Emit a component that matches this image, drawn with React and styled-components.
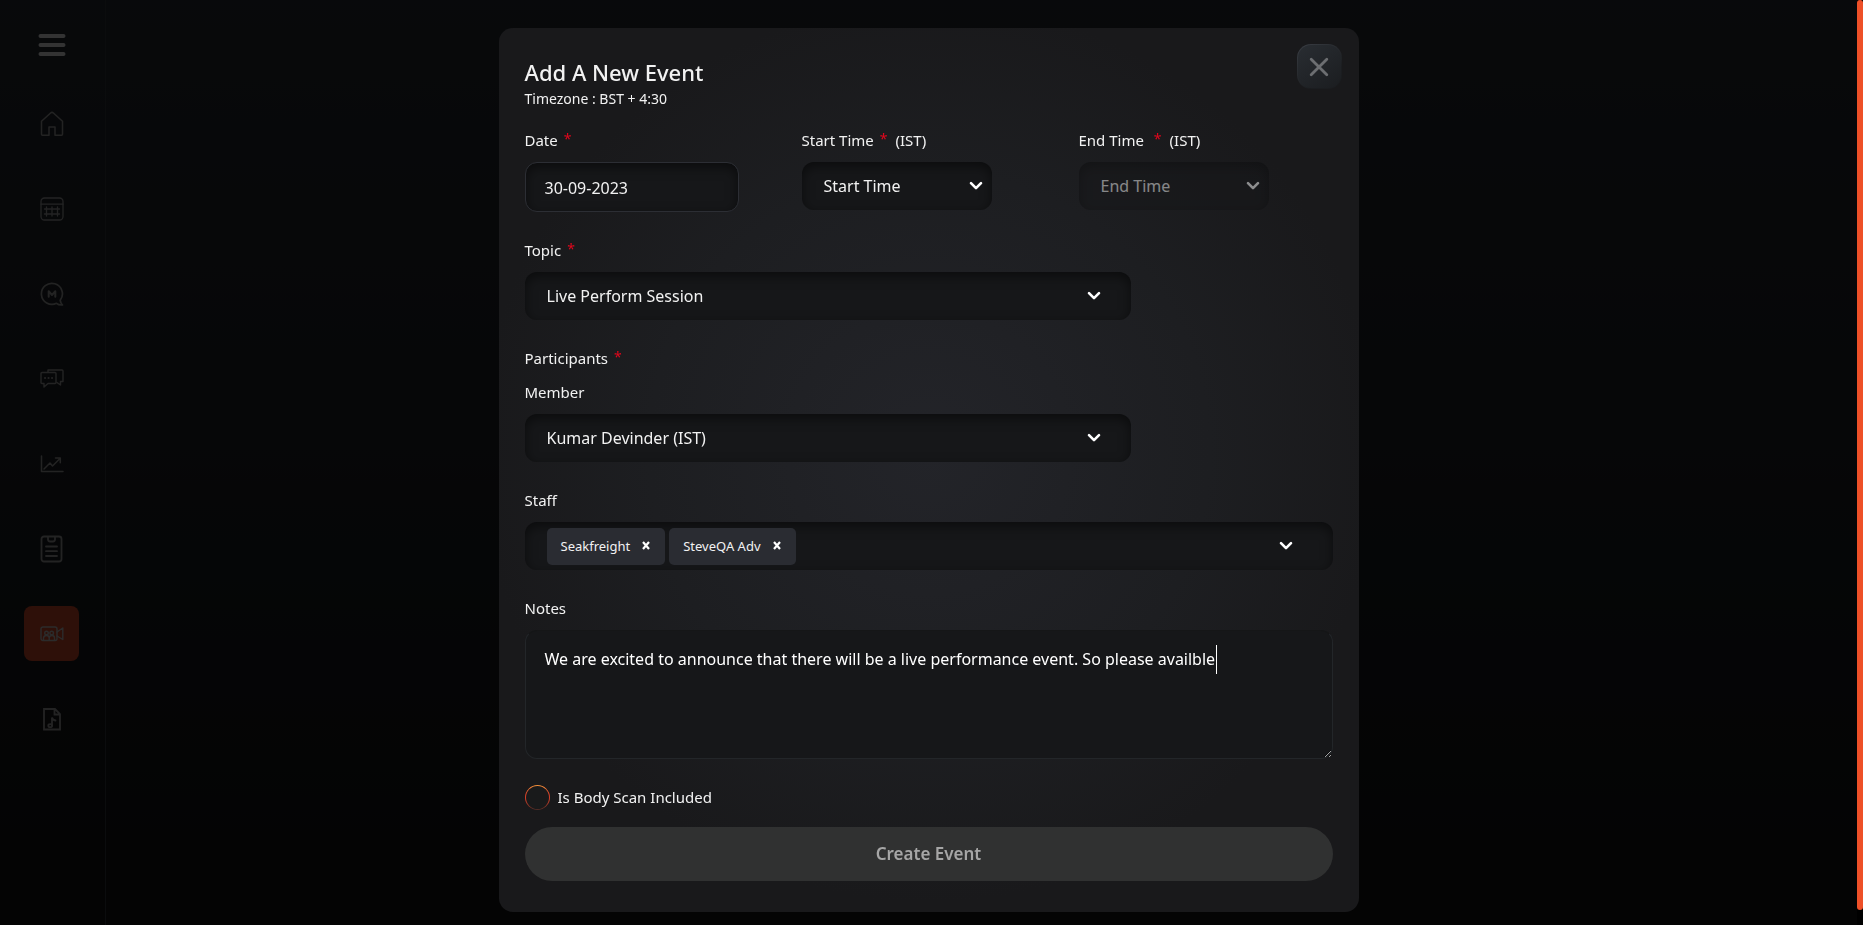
import React, { useLayoutEffect, useRef, useState } from "react";
import styled, { createGlobalStyle } from "styled-components";

const GlobalStyle = createGlobalStyle`
  * { box-sizing: border-box; }
  body {
    margin: 0;
    background: #141414;
    color: #f2f2f2;
    font-family: "Noto Sans", "Open Sans", sans-serif;
    font-size: 16px;
    overflow: hidden;
  }
  button, input, select, textarea { font: inherit; color: inherit; margin: 0; }
`;

const Page = styled.div`
  min-height: 100vh;
  display: flex;
  background: linear-gradient(#2a2f37, #20242a 45%, #141414);
`;

const Sidebar = styled.nav`
  width: 106px;
  padding: 17px 2px 0 0;
  display: flex;
  flex-direction: column;
  align-items: center;
  border-right: 1px solid #3a3c40;
`;

const MenuButton = styled.button`
  width: 55px;
  height: 55px;
  padding: 0;
  border: 0;
  background: none;
  color: #fff;
  display: grid;
  place-items: center;
`;

const NavList = styled.ul`
  list-style: none;
  margin: 24px 0 0;
  padding: 0;
  display: grid;
  gap: 30px;
`;

const NavLink = styled.a`
  width: 55px;
  height: 55px;
  border-radius: 8px;
  display: grid;
  place-items: center;
  color: ${(p) => (p.$active ? "#d6d6d6" : "#afafaf")};
  background: ${(p) => (p.$active ? "#e6502d" : "transparent")};
`;

const Overlay = styled.div`
  position: fixed;
  inset: 0;
  padding: 28px 22px 12px 16px;
  display: flex;
  justify-content: center;
  align-items: flex-start;
  overflow: hidden;
  background: rgba(0, 0, 0, 0.8);
`;

const ScrollThumb = styled.div`
  position: fixed;
  top: 0;
  right: 0;
  bottom: 0;
  width: 6px;
  background: #000;
  &::before {
    content: "";
    display: block;
    height: calc(100% - 15px);
    border-radius: 3px;
    background: #ee5028;
  }
`;

const Dialog = styled.form`
  position: relative;
  width: 100%;
  max-width: 860px;
  padding: 28px 26px 31px;
  border-radius: 14px;
  background: radial-gradient(circle at 50% 48%, #232429 0, #1d1e21 280px, #19191b 450px);
`;

const Title = styled.h1`
  margin: 0;
  font-size: 22px;
  line-height: 33px;
  font-weight: 500;
`;

const Timezone = styled.p`
  margin: 0 0 20px;
  font-size: 14px;
  line-height: 20px;
`;

const CloseButton = styled.button`
  position: absolute;
  top: 16px;
  right: 17px;
  width: 45px;
  height: 45px;
  padding: 0;
  display: grid;
  place-items: center;
  border: 1px solid transparent;
  border-radius: 14px;
  color: #6c6e71;
  background:
    linear-gradient(145deg, #292d32, #1b1d20) padding-box,
    linear-gradient(145deg, #3a3e44, #1b1d20 70%) border-box;
`;

const Fields = styled.div`
  display: grid;
  gap: 27px;
`;

const TimeRow = styled.div`
  display: grid;
  grid-template-columns: 277px 277px 1fr;
`;

const Field = styled.div`
  width: 100%;
  display: grid;
  gap: 11px;
  justify-items: start;
  align-content: start;
`;

const Label = styled.label`
  font-size: 15px;
  line-height: 22px;
`;

const Heading = styled.p`
  margin: 0 0 1px;
  font-size: 15px;
  line-height: 22px;
`;

const Star = styled.span`
  margin: 0 ${(p) => (p.$spaced ? "8px" : "0")} 0 6px;
  font-size: 14px;
  line-height: 1;
  vertical-align: 2px;
  color: #e3061c;
`;

const inset = `
  border: 0;
  border-radius: 12px;
  background: #161719;
  box-shadow: inset 0 4px 12px rgba(0, 0, 0, 0.5);
`;

const DateInput = styled.input`
  ${inset}
  width: 214px;
  height: 50px;
  padding: 2px 19px 0;
  border: 1px solid #2c2e34;
  outline: 0;
`;

const SelectBox = styled.div`
  position: relative;
  width: 100%;
  max-width: ${(p) => p.$width};
  opacity: ${(p) => (p.$dim ? 0.5 : 1)};
`;

const Select = styled.select`
  ${inset}
  display: block;
  appearance: none;
  width: 100%;
  height: 48px;
  padding: 0 48px 0 22px;
  outline: 0;
  opacity: 1;
`;

const ChevronSlot = styled.span`
  position: absolute;
  top: 0;
  bottom: 0;
  right: ${(p) => p.$right};
  display: flex;
  align-items: center;
  pointer-events: none;
`;

const ChipBox = styled.div`
  ${inset}
  position: relative;
  width: 100%;
  min-height: 48px;
  padding: 6px 64px 5px 22px;
  display: flex;
  gap: 4px;
`;

const Chip = styled.span`
  height: 37px;
  padding: 0 15px 2px 14px;
  display: flex;
  align-items: center;
  gap: 12px;
  border-radius: 5px;
  background: #2a2c32;
  font-size: 13px;
`;

const ChipRemove = styled.button`
  padding: 0;
  border: 0;
  background: none;
  color: #fff;
  display: flex;
`;

const NotesBox = styled.div`
  position: relative;
  width: 100%;
`;

const Notes = styled.textarea`
  display: block;
  width: 100%;
  height: 129px;
  padding: 14px 19px;
  line-height: 29px;
  border: 1px solid #232629;
  border-top-color: #151617;
  border-radius: 12px;
  background: #161719;
  color: #fff;
  outline: 0;
  resize: vertical;
  caret-color: transparent;
`;

const Caret = styled.span`
  position: absolute;
  top: 15px;
  width: 1px;
  height: 29px;
  background: #fff;
`;

const CheckRow = styled.label`
  margin: 26px 0 17px;
  display: flex;
  align-items: center;
  gap: 8px;
  font-size: 15px;
  line-height: 25px;
`;

const Check = styled.input`
  appearance: none;
  width: 25px;
  height: 25px;
  border: 1px solid transparent;
  border-radius: 50%;
  background:
    linear-gradient(#191a1b, #191a1b) padding-box,
    linear-gradient(#f0923a, #e2452a 35%, #d03e28 60%, #4a2a24) border-box;
`;

const Submit = styled.button`
  width: 100%;
  height: 54px;
  padding: 0 0 2px;
  border: 0;
  border-radius: 27px;
  background: #303131;
  color: #a6a6a6;
  font-size: 17px;
  font-weight: 600;
`;

function Chevron({ right }) {
  return (
    <ChevronSlot $right={right}>
      <svg width="14" height="10" viewBox="0 0 14 10" fill="none" stroke="#fff" strokeWidth="2.6" strokeLinecap="round" strokeLinejoin="round">
        <path d="M2 2.2 7 7.2 12 2.2" />
      </svg>
    </ChevronSlot>
  );
}

function SelectField({ id, label, required, suffix, value, width, right, disabled }) {
  return (
    <Field>
      <Label htmlFor={id}>
        {label}
        {required && <Star $spaced={!!suffix}>*</Star>}
        {suffix}
      </Label>
      <SelectBox $width={width} $dim={disabled}>
        <Select id={id} disabled={disabled} defaultValue={value}>
          <option>{value}</option>
        </Select>
        <Chevron right={right} />
      </SelectBox>
    </Field>
  );
}

function NotesField() {
  const ref = useRef(null);
  const [text, setText] = useState(
    "We are excited to announce that there will be a live performance event. So please availble"
  );
  const [left, setLeft] = useState(0);
  useLayoutEffect(() => {
    const style = getComputedStyle(ref.current);
    const ctx = document.createElement("canvas").getContext("2d");
    ctx.font = `${style.fontSize} ${style.fontFamily}`;
    setLeft(Math.round(20 + ctx.measureText(text).width));
  }, [text]);
  return (
    <Field>
      <Label htmlFor="notes">Notes</Label>
      <NotesBox>
        <Notes id="notes" ref={ref} value={text} spellCheck={false} onChange={(e) => setText(e.target.value)} />
        <Caret style={{ left }} />
      </NotesBox>
    </Field>
  );
}

const line = { fill: "none", stroke: "currentColor", strokeWidth: 1.5, strokeLinecap: "round", strokeLinejoin: "round" };

const icons = {
  Home: (
    <svg width="24" height="26" viewBox="0 0 24 26" {...line}>
      <path d="M1.500 10.200 10.600 2Q12 .8 13.400 2l9.100 8.200V23.200q0 1-1 1H15V16H9v8.200H2.500q-1 0-1-1Z" />
    </svg>
  ),
  Calendar: (
    <svg width="24" height="24" viewBox="0 0 24 24" {...line} strokeWidth="1.300">
      <rect x="1" y="1" width="22" height="22" rx="3.500" />
      <path d="M1 7.200H23M4.500 12h15M4.500 17h15M6.500 10v9M12 10v9M17.500 10v9" />
    </svg>
  ),
  Messages: (
    <svg width="24" height="24" viewBox="0 0 24 24" {...line} strokeWidth="1.700">
      <path d="M20.200 18.300A10.500 10.500 0 1 0 16.500 21.300Q18.500 23.200 22.500 23 20.600 21 20.200 18.300Z" />
      <path d="M8.700 14.800V9.200l3.300 3.800L15.300 9.200v5.600" strokeWidth="2" />
    </svg>
  ),
  Chat: (
    <svg width="24" height="20" viewBox="0 0 24 20" {...line} strokeWidth="1.400">
      <path d="M8 3V1H22q1 0 1 1V12.500H20.500V16L17 13.500" />
      <path d="M2 3.500H15q1 0 1 1v9q0 1-1 1H8L4 18V14.500H2q-1 0-1-1v-9q0-1 1-1Z" />
      <path d="M5 9h.1M8.500 9h.1M12 9h.1" strokeWidth="2" />
    </svg>
  ),
  Progress: (
    <svg width="24" height="18" viewBox="0 0 24 18" {...line}>
      <path d="M1.500 1V16.500H23M4 14l6-6 2.500 3L20 3.500M15.500 3H20.300V7.800" />
    </svg>
  ),
  Plans: (
    <svg width="24" height="28" viewBox="0 0 24 28" {...line} strokeWidth="1.800">
      <rect x="1.500" y="1.500" width="20" height="25" rx="2.500" />
      <path d="M8 2V4.500Q8.300 6.500 10 6.500h3q1.700 0 2-2V2M6 11.500H17M6 16.200H17M6 21H17" />
    </svg>
  ),
  Live: (
    <svg width="24" height="16" viewBox="0 0 24 16" {...line} strokeWidth="1.400">
      <rect x="1" y="1" width="16" height="13.500" rx="2" />
      <path d="M17 6 22.800 2V13.500L17 10M3.500 14v-2Q3.800 9.500 6.500 9.500T9.200 12v2M9.200 12Q9.500 9.500 12 9.500T14.500 12v2" />
      <circle cx="6.500" cy="7" r="1.800" />
      <circle cx="11.700" cy="7" r="1.800" />
    </svg>
  ),
  Music: (
    <svg width="18" height="24" viewBox="0 0 18 24" {...line} strokeLinejoin="miter" strokeWidth="1.800">
      <path d="M1 2H12L17 7V22.500H1ZM11.500 2V7.500H17" />
      <path d="M9 18.500V10.500Q9.500 13 12.500 13.500" />
      <ellipse cx="7.200" cy="18.700" rx="1.900" ry="1.500" />
    </svg>
  ),
};

export default function App() {
  return (
    <>
      <GlobalStyle />
      <Page>
        <Sidebar>
          <MenuButton type="button" aria-label="Menu">
            <svg width="28" height="24" viewBox="0 0 28 24" stroke="currentColor" strokeWidth="4" strokeLinecap="round">
              <path d="M2.500 3H25.500M2.500 12H25.500M2.500 21H25.500" />
            </svg>
          </MenuButton>
          <NavList>
            {Object.entries(icons).map(([name, icon]) => (
              <li key={name}>
                <NavLink href="#" aria-label={name} $active={name === "Live"}>
                  {icon}
                </NavLink>
              </li>
            ))}
          </NavList>
        </Sidebar>
      </Page>
      <Overlay>
        <Dialog onSubmit={(e) => e.preventDefault()}>
          <Title>Add A New Event</Title>
          <Timezone>Timezone : BST + 4:30</Timezone>
          <CloseButton type="button" aria-label="Close">
            <svg width="20" height="20" viewBox="0 0 20 20" stroke="currentColor" strokeWidth="2.800" strokeLinecap="round">
              <path d="M2.200 2.200 17.800 17.800M17.800 2.200 2.200 17.800" />
            </svg>
          </CloseButton>
          <Fields>
            <TimeRow>
              <Field>
                <Label htmlFor="date">
                  Date<Star>*</Star>
                </Label>
                <DateInput id="date" defaultValue="30-09-2023" />
              </Field>
              <SelectField id="start" label="Start Time" required suffix="(IST)" value="Start Time" width="190px" right="9px" />
              <SelectField id="end" label="End Time " required suffix="(IST)" value="End Time" width="190px" right="9px" disabled />
            </TimeRow>
            <SelectField id="topic" label="Topic" required value="Live Perform Session" width="606px" right="30px" />
            <Field>
              <Heading>
                Participants<Star>*</Star>
              </Heading>
              <SelectField id="member" label="Member" value="Kumar Devinder (IST)" width="606px" right="30px" />
            </Field>
            <Field>
              <Label as="span" id="staff-label">
                Staff
              </Label>
              <ChipBox role="group" aria-labelledby="staff-label">
                {["Seakfreight", "SteveQA Adv"].map((name) => (
                  <Chip key={name}>
                    {name}
                    <ChipRemove type="button" aria-label={`Remove ${name}`}>
                      <svg width="8" height="9" viewBox="0 0 8 9" stroke="currentColor" strokeWidth="2.200">
                        <path d="M1 1 7 8M7 1 1 8" />
                      </svg>
                    </ChipRemove>
                  </Chip>
                ))}
                <Chevron right="40px" />
              </ChipBox>
            </Field>
            <NotesField />
          </Fields>
          <CheckRow>
            <Check type="checkbox" />
            Is Body Scan Included
          </CheckRow>
          <Submit disabled>Create Event</Submit>
        </Dialog>
      </Overlay>
      <ScrollThumb />
    </>
  );
}
